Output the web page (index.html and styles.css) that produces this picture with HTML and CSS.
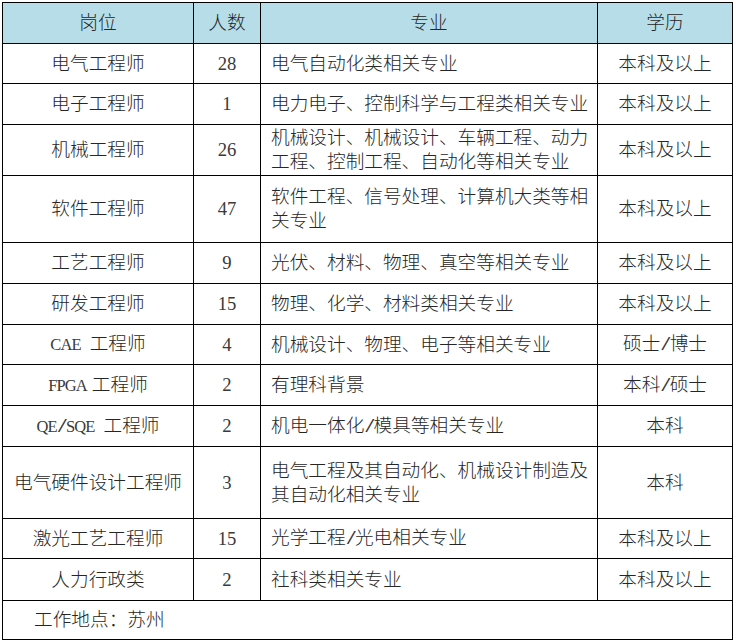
FILE: index.html
```html
<!DOCTYPE html>
<html lang="zh-CN">
<head>
<meta charset="utf-8">
<title>招聘岗位</title>
<link rel="stylesheet" href="styles.css">
</head>
<body>
<table class="jobs">
  <colgroup>
    <col class="c-post">
    <col class="c-num">
    <col class="c-major">
    <col class="c-edu">
  </colgroup>
  <thead>
    <tr class="h41 head">
      <th>岗位</th>
      <th>人数</th>
      <th>专业</th>
      <th>学历</th>
    </tr>
  </thead>
  <tbody>
    <tr class="h40">
      <td>电气工程师</td><td class="num">28</td><td class="left">电气自动化类相关专业</td><td>本科及以上</td>
    </tr>
    <tr class="h41">
      <td>电子工程师</td><td class="num">1</td><td class="left">电力电子、控制科学与工程类相关专业</td><td>本科及以上</td>
    </tr>
    <tr class="h51">
      <td>机械工程师</td><td class="num">26</td><td class="left">机械设计、机械设计、车辆工程、动力<br>工程、控制工程、自动化等相关专业</td><td>本科及以上</td>
    </tr>
    <tr class="h67">
      <td>软件工程师</td><td class="num">47</td><td class="left">软件工程、信号处理、计算机大类等相<br>关专业</td><td>本科及以上</td>
    </tr>
    <tr class="h41">
      <td>工艺工程师</td><td class="num">9</td><td class="left">光伏、材料、物理、真空等相关专业</td><td>本科及以上</td>
    </tr>
    <tr class="h41">
      <td>研发工程师</td><td class="num">15</td><td class="left">物理、化学、材料类相关专业</td><td>本科及以上</td>
    </tr>
    <tr class="h40">
      <td><span class="lat">CAE</span><span class="sp"> </span>工程师</td><td class="num">4</td><td class="left">机械设计、物理、电子等相关专业</td><td>硕士<span class="sl">/</span>博士</td>
    </tr>
    <tr class="h41">
      <td><span class="lat">FPGA</span><span class="gap">工程师</span></td><td class="num">2</td><td class="left">有理科背景</td><td>本科<span class="sl">/</span>硕士</td>
    </tr>
    <tr class="h41">
      <td><span class="lat">QE</span><span class="sl">/</span><span class="lat">SQE</span><span class="sp"> </span>工程师</td><td class="num">2</td><td class="left">机电一体化<span class="sl">/</span>模具等相关专业</td><td>本科</td>
    </tr>
    <tr class="h72">
      <td>电气硬件设计工程师</td><td class="num">3</td><td class="left">电气工程及其自动化、机械设计制造及<br>其自动化相关专业</td><td>本科</td>
    </tr>
    <tr class="h40">
      <td>激光工艺工程师</td><td class="num">15</td><td class="left">光学工程<span class="sl">/</span>光电相关专业</td><td>本科及以上</td>
    </tr>
    <tr class="h42">
      <td>人力行政类</td><td class="num">2</td><td class="left">社科类相关专业</td><td>本科及以上</td>
    </tr>
    <tr class="h39">
      <td colspan="4" class="place">工作地点：苏州</td>
    </tr>
  </tbody>
</table>
</body>
</html>
```
FILE: styles.css
```css
html, body {
  margin: 0;
  padding: 0;
  background: #ffffff;
}

body {
  padding: 2px 0 0 2px;
}

.jobs {
  table-layout: fixed;
  width: 731px;
  border-collapse: separate;
  border-spacing: 0;
  border-top: 1px solid #000;
  border-left: 1px solid #000;
  font-family: "Liberation Serif", "Noto Sans CJK SC", serif;
  font-size: 18.67px;
  line-height: 24px;
  color: #262626;
}

.c-post { width: 191px; }
.c-num { width: 67px; }
.c-major { width: 337px; }
.c-edu { width: 135px; }

.jobs th,
.jobs td {
  border-right: 1px solid #000;
  border-bottom: 1px solid #000;
  padding: 0;
  text-align: center;
  vertical-align: middle;
  font-weight: 300;
  white-space: nowrap;
}

.head th {
  background: #b7dee8;
}

.jobs td.num {
  font-weight: 400;
  color: #3a3a3a;
}

.jobs td.left {
  text-align: left;
  padding-left: 10px;
}

.jobs td.place {
  text-align: left;
  padding-left: 31px;
}

.lat {
  font-family: "Liberation Serif", serif;
  font-weight: 400;
  font-size: 16.5px;
  letter-spacing: -0.9px;
  color: #3a3a3a;
}

.sp {
  display: inline-block;
  width: 9px;
}

.sl {
  font-family: "Liberation Mono", monospace;
  font-weight: 400;
  font-size: 18.67px;
  letter-spacing: -1.87px;
  color: #3a3a3a;
}

.gap {
  margin-left: 5px;
}

.h39 { height: 39px; }
.h40 { height: 40px; }
.h41 { height: 41px; }
.h42 { height: 42px; }
.h51 { height: 51px; }
.h67 { height: 67px; }
.h72 { height: 72px; }
```
